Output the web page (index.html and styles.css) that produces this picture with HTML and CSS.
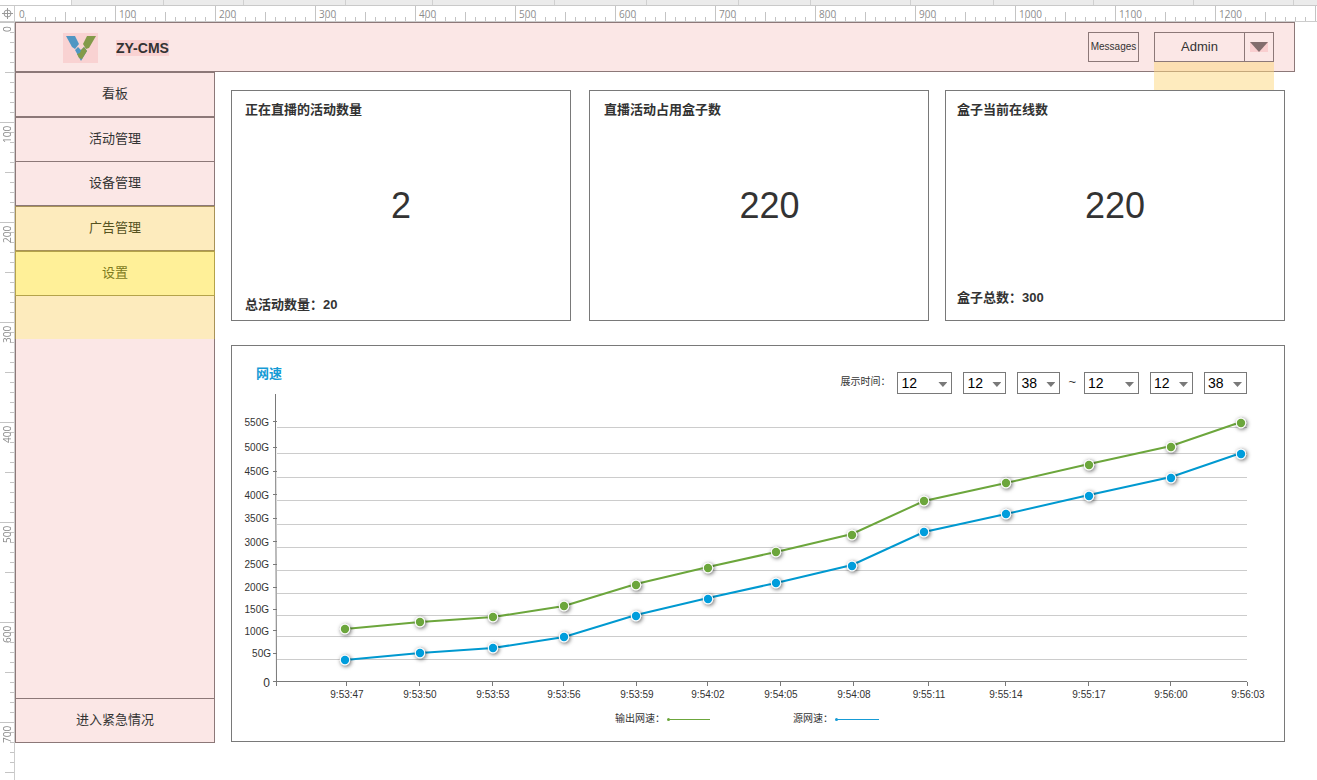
FILE: index.html
```html
<!DOCTYPE html>
<html lang="zh-CN">
<head>
<meta charset="utf-8">
<title>ZY-CMS</title>
<link rel="stylesheet" href="styles.css">
</head>
<body>
<div class="editor">
  <div class="tabs">
    <i class="tab tab-active"></i><i class="tab w92"></i><i class="tab w80"></i><i class="tab w102"></i><i class="tab w87"></i><i class="tab w122"></i><i class="tab w92"></i><i class="tab w92"></i><i class="tab w72"></i><i class="tab w100"></i><i class="tab w83"></i><i class="tab w100"></i><i class="tab w100"></i><i class="tab w100"></i>
  </div>
  <div class="ruler-row">
    <div class="corner">
      <svg width="11" height="11" viewBox="0 0 11 11" fill="none" stroke="#999"><circle cx="5.5" cy="5.5" r="3.5"/><path d="M5.5 0v11M0 5.5h11"/></svg>
    </div>
    <div class="ruler-x">
      <span>0</span><span>100</span><span>200</span><span>300</span><span>400</span><span>500</span><span>600</span><span>700</span><span>800</span><span>900</span><span>1000</span><span>1100</span><span>1200</span><span></span>
    </div>
  </div>
  <div class="stage">
    <div class="ruler-y">
      <span>0</span><span>100</span><span>200</span><span>300</span><span>400</span><span>500</span><span>600</span><span>700</span>
    </div>
    <div class="page">
      <header class="header">
        <div class="identity">
          <svg class="logo" width="35" height="30" viewBox="0 0 35 30">
            <path fill="#5096c3" d="M3 3h9l4 8-4 5-3-2z"/>
            <path fill="#839a49" d="M24 3h9l-7 12-3 1-3-5z"/>
            <path fill="#5096c3" d="M15 14l3 3 3-3 3 4-6 10-6-11z"/>
            <path fill="#839a49" d="M18 17l3-3 3 4-5 8-3-1-2-4 3-1z"/>
          </svg>
          <h1 class="brand">ZY-CMS</h1>
        </div>
        <button class="messages" type="button">Messages</button>
        <div class="account">
          <button class="account-name" type="button">Admin</button>
          <button class="account-toggle" type="button" aria-label="Admin menu"><svg width="18" height="10" viewBox="0 0 18 10"><path fill="#826d6d" d="M0 0h18l-9 10z"/></svg></button>
          <div class="account-menu"></div>
        </div>
      </header>
      <div class="body">
        <nav class="sidebar">
          <a class="item" href="#">看板</a>
          <a class="item" href="#">活动管理</a>
          <a class="item" href="#">设备管理</a>
          <a class="item item-open" href="#">广告管理</a>
          <a class="item item-hot" href="#">设置</a>
          <div class="submenu-area"></div>
          <a class="item item-last" href="#">进入紧急情况</a>
        </nav>
        <main class="main">
          <section class="cards">
            <article class="card"><h2>正在直播的活动数量</h2><p class="num">2</p><p class="total">总活动数量：20</p></article>
            <article class="card card-used"><h2>直播活动占用盒子数</h2><p class="num">220</p></article>
            <article class="card card-online"><h2>盒子当前在线数</h2><p class="num">220</p><p class="total">盒子总数：300</p></article>
          </section>
          <section class="panel">
            <div class="panel-head">
              <h2 class="panel-title">网速</h2>
              <form class="range">
                <span class="range-label">展示时间：</span>
                <label class="pick wide"><select aria-label="起始日"><option>12</option></select></label>
                <label class="pick"><select aria-label="起始时"><option>12</option></select></label>
                <label class="pick"><select aria-label="起始分"><option>38</option></select></label>
                <span class="tilde">~</span>
                <label class="pick wide"><select aria-label="结束日"><option>12</option></select></label>
                <label class="pick"><select aria-label="结束时"><option>12</option></select></label>
                <label class="pick"><select aria-label="结束分"><option>38</option></select></label>
              </form>
            </div>
            <svg class="chart" viewBox="0 0 1052 312">
              <defs>
                <filter id="shadow" x="-60%" y="-60%" width="240%" height="240%"><feDropShadow dx="1" dy="1" stdDeviation="2" flood-color="#000" flood-opacity=".65"/></filter>
                <g id="dot"><circle r="5.2" fill="#fff" filter="url(#shadow)"/><circle r="4.2"/></g>
              </defs>
              <path class="grid" d="M45 33.5H1015M45 59.5H1015M45 83.5H1015M45 106.5H1015M45 130.5H1015M45 153.5H1015M45 176.5H1015M45 199.5H1015M45 221.5H1015M45 242.5H1015M45 265.5H1015"/>
              <path class="axis" d="M43.5 0V28L44.5 292M41 287.5H1015M41 27.5h4M41 53.5h4M41 77.5h4M41 100.5h4M41 124.5h4M41 147.5h4M41 170.5h4M41 193.5h4M41 215.5h4M41 236.5h4M41 259.5h4M114.5 288v4M187.5 288v4M260.5 288v4M331.5 288v4M404.5 288v4M475.5 288v4M548.5 288v4M621.5 288v4M696.5 288v4M773.5 288v4M856.5 288v4M938.5 288v4M1015.5 288v4"/>
              <g class="ylabels">
                <text x="37" y="32">550G</text><text x="37" y="57">500G</text><text x="37" y="81">450G</text><text x="37" y="105">400G</text><text x="37" y="128">350G</text><text x="37" y="152">300G</text><text x="37" y="174">250G</text><text x="37" y="197">200G</text><text x="37" y="219">150G</text><text x="37" y="241">100G</text><text x="39" y="263">50G</text><text class="zero" x="38" y="293">0</text>
              </g>
              <g class="xlabels">
                <text x="115" y="304">9:53:47</text><text x="188" y="304">9:53:50</text><text x="261" y="304">9:53:53</text><text x="332" y="304">9:53:56</text><text x="405" y="304">9:53:59</text><text x="476" y="304">9:54:02</text><text x="549" y="304">9:54:05</text><text x="622" y="304">9:54:08</text><text x="697" y="304">9:55:11</text><text x="774" y="304">9:55:14</text><text x="857" y="304">9:55:17</text><text x="939" y="304">9:56:00</text><text x="1016" y="304">9:56:03</text>
              </g>
              <g class="out">
                <polyline points="113,235 188,228 261,223 332,212 404,190 476,173 544,158 620,140 692,107 774,89 857,70 939,52 1009,28"/>
                <use href="#dot" x="113" y="235"/><use href="#dot" x="188" y="228"/><use href="#dot" x="261" y="223"/><use href="#dot" x="332" y="212"/><use href="#dot" x="404" y="191"/><use href="#dot" x="476" y="174"/><use href="#dot" x="544" y="158"/><use href="#dot" x="620" y="141"/><use href="#dot" x="692" y="107"/><use href="#dot" x="774" y="89"/><use href="#dot" x="857" y="71"/><use href="#dot" x="939" y="53"/><use href="#dot" x="1009" y="29"/>
              </g>
              <g class="src">
                <polyline points="113,266 188,259 261,254 332,243 404,221 476,204 544,189 620,171 692,138 774,120 857,101 939,83 1009,59"/>
                <use href="#dot" x="113" y="266"/><use href="#dot" x="188" y="259"/><use href="#dot" x="261" y="254"/><use href="#dot" x="332" y="243"/><use href="#dot" x="404" y="222"/><use href="#dot" x="476" y="205"/><use href="#dot" x="544" y="189"/><use href="#dot" x="620" y="172"/><use href="#dot" x="692" y="138"/><use href="#dot" x="774" y="120"/><use href="#dot" x="857" y="102"/><use href="#dot" x="939" y="84"/><use href="#dot" x="1009" y="60"/>
              </g>
            </svg>
            <div class="legend">
              <span class="key key-out">输出网速：<svg width="44" height="6" viewBox="0 0 44 6"><circle cx="1.5" cy="3.5" r="1.5"/><path d="M1 3h42v1H1z"/></svg></span>
              <span class="key key-src">源网速：<svg width="44" height="6" viewBox="0 0 44 6"><circle cx="1.5" cy="3.5" r="1.5"/><path d="M1 3h43v1H1z"/></svg></span>
            </div>
          </section>
        </main>
      </div>
    </div>
  </div>
</div>
</body>
</html>
```

FILE: styles.css
```css
* { box-sizing: border-box; }
body { margin: 0; background: #fff; color: #333; font: 13px/16px "Liberation Sans", "Noto Sans CJK SC", sans-serif; }
h1, h2, p { margin: 0; }
button, select { font: inherit; color: inherit; margin: 0; padding: 0; background: none; border: 0; }
svg { display: block; }

.editor { min-height: 100vh; overflow: hidden; display: flex; flex-direction: column; }
.tabs { display: flex; height: 6px; background: #ebebeb; border-bottom: 1px solid #c9c9c9; overflow: hidden; }
.tab { flex: none; border-right: 1px solid #d0d0d0; }
.tab-active { width: 72px; background: #fff; }
.w72 { width: 72px; } .w80 { width: 80px; } .w83 { width: 83px; } .w87 { width: 87px; }
.w92 { width: 92px; } .w100 { width: 100px; } .w102 { width: 102px; } .w122 { width: 122px; }

.ruler-row { display: flex; height: 16px; border-bottom: 1px solid #ccc; overflow: hidden; }
.corner { flex: none; width: 15px; display: flex; align-items: center; justify-content: center; border-right: 1px solid #ccc; }
.ruler-x { display: flex; }
.ruler-x span {
  flex: none; width: 100px; padding-left: 3px; border-left: 1px solid #c4c4c4;
  font: 10px/16px "Open Sans", sans-serif; color: #8c8c8c;
  background:
    linear-gradient(#c4c4c4, #c4c4c4) 49px 100% / 1px 9px no-repeat,
    repeating-linear-gradient(90deg, transparent 0 9px, #c4c4c4 9px 10px) 0 100% / 100% 4px no-repeat;
}
.ruler-x span:first-child { border-left-color: transparent; }

.stage { flex: 1; display: flex; }
.ruler-y { flex: none; width: 15px; border-right: 1px solid #ccc; height: 758px; overflow: hidden; }
.ruler-y span {
  display: block; height: 100px; padding-bottom: 3px; border-bottom: 1px solid #c4c4c4;
  writing-mode: vertical-rl; transform: rotate(180deg);
  font: 10px/14px "Open Sans", sans-serif; color: #8c8c8c; text-align: right;
  background:
    linear-gradient(#c4c4c4, #c4c4c4) 0 49px / 9px 1px no-repeat,
    repeating-linear-gradient(0deg, transparent 0 9px, #c4c4c4 9px 10px) 0 0 / 4px 100% no-repeat;
}
.page { flex: 1; min-width: 0; }

.header {
  display: flex; align-items: center; height: 50px; margin-right: 22px; padding: 0 20px 0 47px;
  background: #fbe7e6; border: 1px solid #8c7878;
}
.identity { display: flex; align-items: center; gap: 18px; margin-right: auto; padding-top: 2px; }
.logo { background: #f9d2d2; }
.brand { font-size: 14px; font-weight: bold; background: #f9d2d2; }
.messages { width: 51px; height: 30px; margin-right: 15px; border: 1px solid #8c7878; font-size: 10px; white-space: nowrap; }
.account { position: relative; display: flex; width: 120px; height: 30px; border: 1px solid #8c7878; }
.account-name { flex: 1; }
.account-toggle { width: 29px; display: flex; align-items: center; justify-content: center; border-left: 1px solid #8c7878; }
.account-toggle svg { background: #f9cfd0; }
.account-menu { position: absolute; top: 29px; left: -1px; right: -1px; height: 28px; background: rgba(253, 216, 125, .5); }

.body { display: flex; align-items: flex-start; }
.sidebar {
  flex: none; display: flex; flex-direction: column; width: 200px; height: 671px;
  background: #fbe7e6; border: 1px solid #8c7878;
}
.item {
  height: 45px; line-height: 42px; flex: none; margin: 0 -1px; text-align: center; color: #333; text-decoration: none;
  border: 1px solid #8c7878;
}
.item:first-child { margin-top: -1px; }
.item:nth-child(3) { margin-top: -1px; }
.item-open { background: #fdebbd; border-color: #a89258; color: #55521f; }
.item-hot { background: #fff098; border-color: #b5a34a; color: #7d7a20; }
.submenu-area { height: 43px; margin: 0 -1px; background: #fdebbd; border: 1px solid #a89258; border-width: 0 1px; }
.item-last { margin-top: auto; margin-bottom: -1px; }

.main { flex: 1; min-width: 0; padding: 18px 32px 0 16px; }
.cards { display: grid; grid-template-columns: repeat(3, 1fr); gap: 17px; }
.card { display: flex; flex-direction: column; height: 231px; padding: 11px 13px 7px; border: 1px solid #797979; }
.card-used { margin: 0 -1px 0 1px; padding-left: 14px; }
.card-used .num { padding-left: 20px; }
.card-online { padding: 11px 11px 14px; }
.card h2, .total { font-size: 13px; font-weight: bold; }
.num { padding: 67px 0 0; font-size: 36px; line-height: 42px; text-align: center; }
.total { margin-top: auto; }

.panel { margin-top: 24px; border: 1px solid #797979; }
.panel-head { display: flex; justify-content: space-between; height: 48px; padding: 19px 37px 0 24px; }
.panel-title { font-size: 13px; line-height: 18px; color: #169bd5; }
.range { display: flex; align-items: flex-start; gap: 11px; height: 22px; padding-top: 7px; }
.range-label { font-size: 10px; line-height: 20px; margin-right: -4px; }
.pick { position: relative; width: 43px; height: 22px; border: 1px solid #797979; }
.pick.wide { width: 55px; }
.pick::after {
  content: ""; position: absolute; right: 4px; top: 9px; width: 9px; height: 5px;
  background: #797979; clip-path: polygon(0 0, 100% 0, 50% 100%); pointer-events: none;
}
.pick select { display: block; appearance: none; width: 100%; height: 20px; padding-left: 3px; font-size: 14px; line-height: 20px; color: #000; }
.tilde { line-height: 20px; margin: 0 -3px; }

.chart { width: 100%; height: auto; }
.chart text { font-size: 10px; fill: #333; }
.chart .zero { font-size: 12px; }
.ylabels { text-anchor: end; }
.xlabels { text-anchor: middle; }
.grid { stroke: #ccc; }
.axis { stroke: #797979; fill: none; }
.chart polyline { fill: none; stroke-width: 2; }
.out { stroke: #6ca63c; fill: #6ca63c; }
.src { stroke: #0099d0; fill: #009ddc; }
.chart circle { stroke: none; }
.legend { display: flex; align-items: flex-start; justify-content: center; gap: 82px; height: 35px; padding: 5px 22px 0 0; font-size: 10px; line-height: 16px; }
.key { display: flex; align-items: center; gap: 2px; }
.key-out { fill: #6ca63c; }
.key-src { fill: #169bd5; }
```
